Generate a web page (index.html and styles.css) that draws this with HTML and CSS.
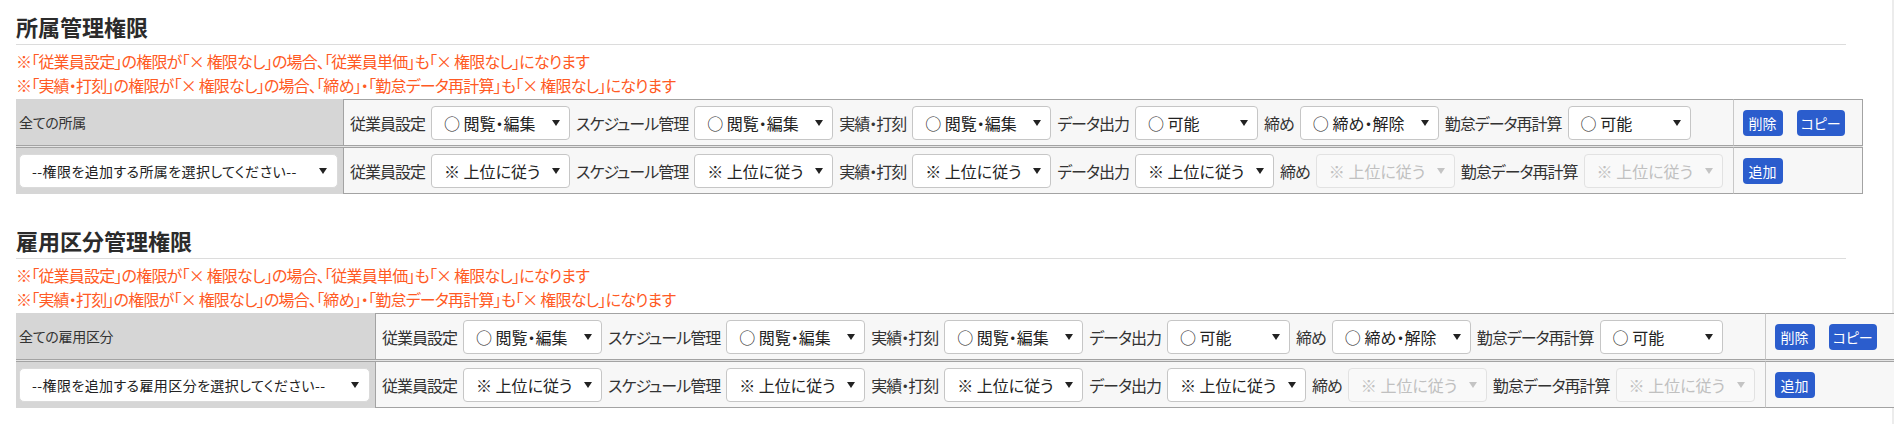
FILE: index.html
```html
<!DOCTYPE html>
<html lang="ja">
<head>
<meta charset="utf-8">
<title>権限設定</title>
<link rel="stylesheet" href="styles.css">
</head>
<body>
<div class="page">

  <section class="section">
    <h2 class="title">所属管理権限</h2>
    <div class="notes">
      <p>※「従業員設定」の権限が「× 権限なし」の場合、「従業員単価」も「× 権限なし」になります</p>
      <p>※「実績・打刻」の権限が「× 権限なし」の場合、「締め」・「勤怠データ再計算」も「× 権限なし」になります</p>
    </div>
    <div class="perm">
      <div class="head head-top">全ての所属</div>
      <div class="opts">
        <span class="lbl">従業員設定</span>
        <div class="sel"><span>○ 閲覧・編集</span><i class="caret"></i></div>
        <span class="lbl">スケジュール管理</span>
        <div class="sel"><span>○ 閲覧・編集</span><i class="caret"></i></div>
        <span class="lbl">実績・打刻</span>
        <div class="sel"><span>○ 閲覧・編集</span><i class="caret"></i></div>
        <span class="lbl">データ出力</span>
        <div class="sel sel-narrow"><span>○ 可能</span><i class="caret"></i></div>
        <span class="lbl">締め</span>
        <div class="sel"><span>○ 締め・解除</span><i class="caret"></i></div>
        <span class="lbl">勤怠データ再計算</span>
        <div class="sel sel-narrow"><span>○ 可能</span><i class="caret"></i></div>
      </div>
      <div class="btns">
        <span class="btn">削除</span>
        <span class="btn">コピー</span>
      </div>

      <div class="head head-bottom">
        <div class="lead lead-dept"><span>--権限を追加する所属を選択してください--</span><i class="caret"></i></div>
      </div>
      <div class="opts">
        <span class="lbl">従業員設定</span>
        <div class="sel"><span>※ 上位に従う</span><i class="caret"></i></div>
        <span class="lbl">スケジュール管理</span>
        <div class="sel"><span>※ 上位に従う</span><i class="caret"></i></div>
        <span class="lbl">実績・打刻</span>
        <div class="sel"><span>※ 上位に従う</span><i class="caret"></i></div>
        <span class="lbl">データ出力</span>
        <div class="sel"><span>※ 上位に従う</span><i class="caret"></i></div>
        <span class="lbl">締め</span>
        <div class="sel is-disabled"><span>※ 上位に従う</span><i class="caret"></i></div>
        <span class="lbl">勤怠データ再計算</span>
        <div class="sel is-disabled"><span>※ 上位に従う</span><i class="caret"></i></div>
      </div>
      <div class="btns">
        <span class="btn">追加</span>
      </div>
    </div>
  </section>

  <section class="section">
    <h2 class="title">雇用区分管理権限</h2>
    <div class="notes">
      <p>※「従業員設定」の権限が「× 権限なし」の場合、「従業員単価」も「× 権限なし」になります</p>
      <p>※「実績・打刻」の権限が「× 権限なし」の場合、「締め」・「勤怠データ再計算」も「× 権限なし」になります</p>
    </div>
    <div class="perm">
      <div class="head head-top">全ての雇用区分</div>
      <div class="opts">
        <span class="lbl">従業員設定</span>
        <div class="sel"><span>○ 閲覧・編集</span><i class="caret"></i></div>
        <span class="lbl">スケジュール管理</span>
        <div class="sel"><span>○ 閲覧・編集</span><i class="caret"></i></div>
        <span class="lbl">実績・打刻</span>
        <div class="sel"><span>○ 閲覧・編集</span><i class="caret"></i></div>
        <span class="lbl">データ出力</span>
        <div class="sel sel-narrow"><span>○ 可能</span><i class="caret"></i></div>
        <span class="lbl">締め</span>
        <div class="sel"><span>○ 締め・解除</span><i class="caret"></i></div>
        <span class="lbl">勤怠データ再計算</span>
        <div class="sel sel-narrow"><span>○ 可能</span><i class="caret"></i></div>
      </div>
      <div class="btns">
        <span class="btn">削除</span>
        <span class="btn">コピー</span>
      </div>

      <div class="head head-bottom">
        <div class="lead lead-emp"><span>--権限を追加する雇用区分を選択してください--</span><i class="caret"></i></div>
      </div>
      <div class="opts">
        <span class="lbl">従業員設定</span>
        <div class="sel"><span>※ 上位に従う</span><i class="caret"></i></div>
        <span class="lbl">スケジュール管理</span>
        <div class="sel"><span>※ 上位に従う</span><i class="caret"></i></div>
        <span class="lbl">実績・打刻</span>
        <div class="sel"><span>※ 上位に従う</span><i class="caret"></i></div>
        <span class="lbl">データ出力</span>
        <div class="sel"><span>※ 上位に従う</span><i class="caret"></i></div>
        <span class="lbl">締め</span>
        <div class="sel is-disabled"><span>※ 上位に従う</span><i class="caret"></i></div>
        <span class="lbl">勤怠データ再計算</span>
        <div class="sel is-disabled"><span>※ 上位に従う</span><i class="caret"></i></div>
      </div>
      <div class="btns">
        <span class="btn">追加</span>
      </div>
    </div>
  </section>

</div>
</body>
</html>
```

FILE: styles.css
```css
html {
  background: linear-gradient(to left, #ececec 2px, #ffffff 2px);
}
body {
  margin: 0;
  font-family: "Noto Sans CJK JP", "Noto Sans", sans-serif;
  font-feature-settings: "palt";
  color: #333;
  font-size: 16px;
}
.page {
  padding: 11px 48px 0 16px;
}
.section + .section {
  margin-top: 31px;
}
.title {
  margin: 0;
  font-size: 22px;
  font-weight: bold;
  line-height: 30px;
  padding-bottom: 3px;
  border-bottom: 1px solid #dcdcdc;
  color: #2b2b2b;
}
.notes {
  margin-top: 4px;
  color: #ff5a24;
  font-size: 16px;
  line-height: 24px;
  letter-spacing: -0.8px;
}
.notes p {
  margin: 0;
  white-space: nowrap;
}
.perm {
  margin-top: 2px;
  display: grid;
  grid-template-columns: auto auto auto;
  row-gap: 1px;
  width: max-content;
  background: #e4e4e4;
}
.head {
  background: #d6d6d6;
  padding: 0 5px 0 3px;
  display: flex;
  align-items: center;
  font-size: 14px;
  color: #333;
  letter-spacing: -0.3px;
}
.head-top {
  border-bottom: 1px solid #a3a3a3;
}
.head-bottom {
  border-top: 1px solid #a3a3a3;
}
.opts {
  background: #f7f7f7;
  border: 1px solid #a3a3a3;
  border-right: 0;
  padding: 6px 10px 5px 6px;
  display: flex;
  align-items: center;
  gap: 6px;
}
.lbl {
  white-space: nowrap;
  color: #333;
  letter-spacing: -1px;
}
.sel {
  box-sizing: border-box;
  width: 139px;
  height: 34px;
  border: 1px solid #c6c6c6;
  border-radius: 4px;
  background: #fff;
  padding: 0 9px 0 12px;
  display: flex;
  align-items: center;
  justify-content: space-between;
  white-space: nowrap;
  color: #222;
}
.sel-narrow {
  width: 123px;
}
.sel.is-disabled {
  background: #f9f9f9;
  border-color: #e2e2e2;
  color: #c0c0c0;
}
.caret {
  width: 0;
  height: 0;
  border-left: 4px solid transparent;
  border-right: 4px solid transparent;
  border-top: 6px solid #222;
  flex: none;
}
.is-disabled .caret {
  border-top-color: #c4c4c4;
}
.lead {
  box-sizing: border-box;
  height: 34px;
  border: 1px solid #dadada;
  border-radius: 5px;
  background: #fff;
  padding: 0 10px 0 12px;
  display: flex;
  align-items: center;
  justify-content: space-between;
  white-space: nowrap;
  font-size: 14px;
  letter-spacing: 0.4px;
  color: #222;
}
.lead .caret {
  margin-left: 8px;
}
.lead-dept {
  width: 319px;
}
.lead-emp {
  width: 351px;
}
.btns {
  background: #f7f7f7;
  border: 1px solid #a3a3a3;
  border-left: 1px solid #c8c8c8;
  padding: 0 17px 0 9px;
  display: flex;
  align-items: center;
  gap: 14px;
}
.btn {
  box-sizing: border-box;
  min-width: 40px;
  height: 26px;
  line-height: 26px;
  padding: 0 4px;
  border-radius: 4px;
  background: #2b5dcd;
  color: #fff;
  font-size: 14px;
  text-align: center;
  white-space: nowrap;
}
```
